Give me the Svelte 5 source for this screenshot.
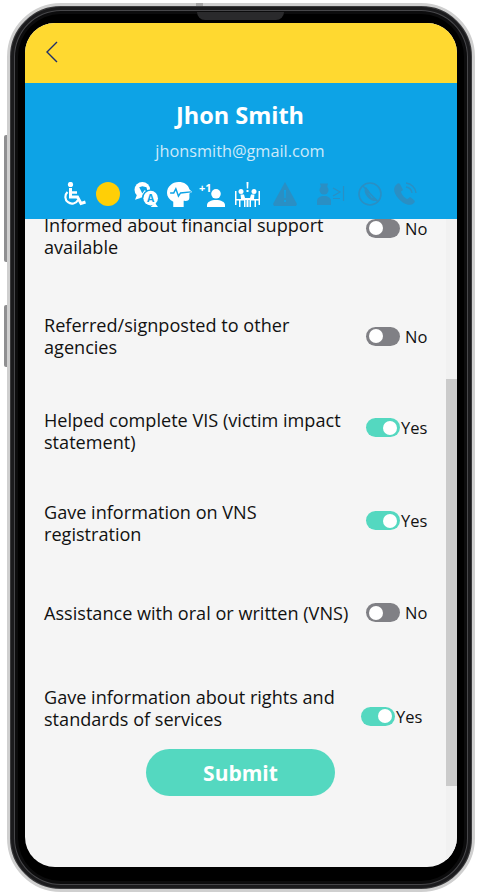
<script>
  const rows = [
    { lines: ['Informed about financial support', 'available'], on: false, gap: -5, lift: 16 },
    { lines: ['Referred/signposted to other', 'agencies'], on: false, gap: 56, lift: 0 },
    { lines: ['Helped complete VIS (victim impact', 'statement)'], on: true, gap: 51, lift: 7 },
    { lines: ['Gave information on VNS', 'registration'], on: true, gap: 48, lift: 5 },
    { lines: ['Assistance with oral or written (VNS)'], on: false, gap: 57, lift: 1 },
    { lines: ['Gave information about rights and', 'standards of services'], on: true, gap: 62, lift: -16, shift: true }
  ];
</script>

<div class="phone">
  <span class="side side-a"></span>
  <span class="side side-b"></span>
  <span class="top-btn"></span>
  <span class="speaker"></span>
  <div class="screen">
    <header class="topbar">
      <svg class="back" viewBox="0 0 12 22" width="12" height="22" aria-label="Back">
        <path d="M11 1 1 11l10 10" fill="none" stroke="#1f2f6b" stroke-width="1.4" />
      </svg>
    </header>
    <section class="profile">
      <h1>Jhon Smith</h1>
      <p>jhonsmith@gmail.com</p>
      <div class="icons">
        <svg viewBox="0 0 24 24" width="24" height="24" fill="none" stroke="#fff">
          <circle cx="8.500" cy="2.500" r="2.600" fill="#fff" stroke="none" />
          <path d="M8.500 6v9h7l3.500 6.500 4.500-1.500" stroke-width="3" />
          <path d="M8.500 10.500h6.500" stroke-width="2.400" />
          <path d="M5.500 10a6.700 6.700 0 1 0 10.500 8" stroke-width="2.200" />
        </svg>
        <span class="dot"></span>
        <svg viewBox="0 0 24 24" width="25" height="25">
          <circle cx="8" cy="7.500" r="7.500" fill="#fff" />
          <path d="M3 12l-2 5 6-2z" fill="#fff" />
          <circle cx="16" cy="15.500" r="8.500" fill="#0da3e6" />
          <circle cx="16" cy="15.500" r="7" fill="#fff" />
          <path d="M20 20l3 4h-7z" fill="#fff" />
          <text x="16" y="19.500" text-anchor="middle" class="qa">A</text>
          <path d="M5 5l3 6 2-3 3 1-1-4-4-1z" fill="#0da3e6" />
        </svg>
        <svg viewBox="0 0 24 24" width="25" height="25">
          <path d="M11 0c5.500 0 9.500 2.500 10.500 7l2.500 2.500-2.500 1.500v4c0 2.500-2 3.500-5.500 3v6H6v-5C2 17 0 13.500 0 10.500 0 4.500 5 0 11 0z" fill="#fff" />
          <path d="M3 10.500h3.500l2-4 2.500 7 2-3 10-1" fill="none" stroke="#0da3e6" stroke-width="1.400" />
        </svg>
        <span class="plus">
          <small>+1</small>
          <svg viewBox="0 0 18 18" width="18" height="18" fill="#fff">
            <circle cx="9" cy="4.800" r="4.800" />
            <path d="M0 18v-2c0-3 4-5 9-5s9 2 9 5v2z" />
          </svg>
        </span>
        <svg viewBox="0 0 25 25" width="25" height="25" fill="#fff">
          <path d="M11.500 0h2l-.3 6.500h-1.400zM11.500 8h2v2h-2z" />
          <circle cx="6" cy="9.500" r="2.500" />
          <circle cx="19" cy="9.500" r="2.500" />
          <path d="M0 9h1.500v8H6l-.5-4.500h3.500l1 3.500h5l1-3.500h3.500L19 17h4.500V9H25v14h-1.500v-4.500H21V25h-1.500v-6.500H16V25h-1.500v-7h-4v7H9v-6.500H5.500V25H4v-6.500H1.500V23H0z" />
          <path d="M11.500 18h2v7h-2z" />
        </svg>
        <svg viewBox="0 0 24 24" width="24" height="24" fill="#2a8fc4">
          <path d="M12 0 .5 21c-.8 1.600.2 3 1.500 3h20c1.300 0 2.300-1.400 1.500-3z" />
          <path d="M11 8h2l-.4 8h-1.200zM11 18h2v2h-2z" fill="#0da3e6" />
        </svg>
        <svg viewBox="0 0 28 24" width="28" height="24" fill="#2a8fc4">
          <circle cx="7" cy="8" r="4.500" />
          <path d="M3 1.500h8l-1 3.500H4z" />
          <path d="M0 23v-4c0-3 3-5 7-5s7 2 7 5v4z" />
          <path d="M16 6l7 4-7 4M16 16.500h7M26.500 4v15" fill="none" stroke="#2a8fc4" stroke-width="1.200" />
        </svg>
        <svg viewBox="0 0 24 24" width="24" height="24" fill="none" stroke="#2a8fc4">
          <circle cx="12" cy="12" r="11" stroke-width="1.600" />
          <path d="M5 4l15 16" stroke-width="1.400" />
          <path d="M8 5C6 7 6 11 9.500 15s7.500 5 10 3l-3.500-3-2 1-3.500-4.500 1-2z" fill="#2a8fc4" stroke="none" />
        </svg>
        <svg viewBox="0 0 24 24" width="24" height="24" fill="none" stroke="#2a8fc4">
          <path d="M4 2C0 5 0 10 5 16s12 9 16 5c1-1 1-2 0-3l-4-3-2.500 2c-2 0-6.500-5-6.500-7.500L10 8 7 2c-1-1-2-1-3 0z" fill="#2a8fc4" stroke="none" />
          <path d="M13 5a7 7 0 0 1 6 6M13 1a11 11 0 0 1 10 10" stroke-width="1.400" />
        </svg>
      </div>
    </section>
    <main class="list">
      {#each rows as row}
        <div class="row" style="margin-top: {row.gap}px">
          <div class="label">
            {#each row.lines as line}
              <div>{line}</div>
            {/each}
          </div>
          <div class="switch" class:shift={row.shift} style="margin-top: {-row.lift}px">
            <span class="track" class:on={row.on}><span class="knob"></span></span>
            <span class="value" class:yes={row.on}>{row.on ? 'Yes' : 'No'}</span>
          </div>
        </div>
      {/each}
      <button class="submit">Submit</button>
      <div class="scrollbar"><span></span></div>
    </main>
  </div>
</div>

<style>
  :global(body) {
    background: #fff;
  }
  .phone {
    position: relative;
    box-sizing: border-box;
    width: 468px;
    height: 889px;
    margin: 3px 0 0 7px;
    padding: 17px 15px 22px;
    border: 3px solid #cfcfcf;
    border-radius: 54px;
    background: #000;
    box-shadow: inset 0 0 0 1px #3a3a3c, inset 0 0 0 4px #1b1b1d, inset 0 0 0 5px #47474a, inset 0 0 0 8px #0c0c0d;
  }
  .side {
    position: absolute;
    left: -6px;
    width: 3px;
    background: #8f8f91;
    border-radius: 2px 0 0 2px;
  }
  .side-a {
    top: 129px;
    height: 127px;
  }
  .side-b {
    top: 299px;
    height: 62px;
  }
  .top-btn {
    position: absolute;
    top: -3px;
    left: 186px;
    width: 7px;
    height: 3px;
    background: #a5a5a5;
  }
  .speaker {
    position: absolute;
    top: 6px;
    left: 187px;
    width: 87px;
    height: 8px;
    border-radius: 0 0 8px 8px;
    background: #2a2a2c;
  }
  .screen {
    display: flex;
    flex-direction: column;
    height: 100%;
    overflow: hidden;
    border-radius: 30px;
    background: #f5f5f5;
    font-family: 'Open Sans', sans-serif;
    color: #111;
  }
  .topbar {
    flex: 0 0 60px;
    display: flex;
    align-items: center;
    padding-left: 21px;
    background: #ffd930;
  }
  .back {
    margin-top: -2px;
  }
  .profile {
    flex: 0 0 136px;
    box-sizing: border-box;
    padding-top: 14px;
    background: #0da3e6;
    color: #fff;
    text-align: center;
    position: relative;
    z-index: 1;
  }
  h1 {
    margin: 0;
    font-size: 23.5px;
    line-height: 36px;
    font-weight: 700;
    text-align: center;
    transform: translateX(-1px);
  }
  p {
    margin: 7px 0 0;
    font-size: 16.300px;
    line-height: 22px;
    color: #cdeafa;
    transform: translateX(-1px);
  }
  .icons {
    display: flex;
    align-items: center;
    height: 26px;
    margin-top: 19px;
    padding-left: 37px;
  }
  .dot {
    flex: none;
    width: 24px;
    height: 24px;
    margin-left: 10px;
    border-radius: 50%;
    background: #ffcf06;
  }
  .icons > :nth-child(3) {
    margin-left: 14px;
  }
  .icons > :nth-child(4) {
    margin-left: 8px;
  }
  .icons > :nth-child(5) {
    margin-left: 7px;
  }
  .icons > :nth-child(6) {
    margin-left: 9px;
  }
  .icons > :nth-child(7) {
    margin-left: 13px;
  }
  .icons > :nth-child(8) {
    margin-left: 20px;
  }
  .icons > :nth-child(9) {
    margin-left: 13px;
  }
  .icons > :nth-child(10) {
    margin-left: 11px;
  }
  .qa {
    font: 700 10px 'Open Sans', sans-serif;
    fill: #0da3e6;
  }
  .plus {
    display: flex;
    align-items: flex-end;
    width: 27px;
    height: 25px;
    color: #fff;
  }
  .plus small {
    font-size: 11px;
    font-weight: 700;
    line-height: 11px;
    align-self: flex-start;
    margin-right: -5px;
  }
  .plus svg {
    flex: none;
  }
  .list {
    position: relative;
    flex: 1;
    overflow: hidden;
    padding-left: 19px;
  }
  .row {
    display: flex;
    align-items: center;
  }
  .label {
    flex: 0 0 322px;
    font-size: 18.100px;
    line-height: 22px;
    white-space: nowrap;
  }
  .switch {
    display: flex;
    align-items: center;
    font-size: 16.500px;
  }
  .shift {
    margin-left: -5px;
  }
  .track {
    display: block;
    box-sizing: border-box;
    width: 34px;
    height: 19px;
    padding: 2.500px 3px;
    border-radius: 10px;
    background: #808085;
  }
  .track.on {
    background: #54d8c0;
  }
  .knob {
    display: block;
    width: 14px;
    height: 14px;
    border-radius: 50%;
    background: #fff;
  }
  .track.on .knob {
    margin-left: 14px;
  }
  .value {
    margin-left: 5px;
  }
  .value.yes {
    margin-left: 1px;
  }
  .submit {
    display: block;
    width: 189px;
    height: 47px;
    margin: 19px 0 0 102px;
    border: none;
    border-radius: 24px;
    background: #54d8c0;
    color: #fff;
    font: 700 21px 'Open Sans', sans-serif;
  }
  .scrollbar {
    position: absolute;
    top: 0;
    right: 0;
    bottom: 0;
    width: 11px;
    background: #f1f1f1;
  }
  .scrollbar span {
    display: block;
    height: 407px;
    margin-top: 160px;
    background: #cbcbcb;
  }
</style>
